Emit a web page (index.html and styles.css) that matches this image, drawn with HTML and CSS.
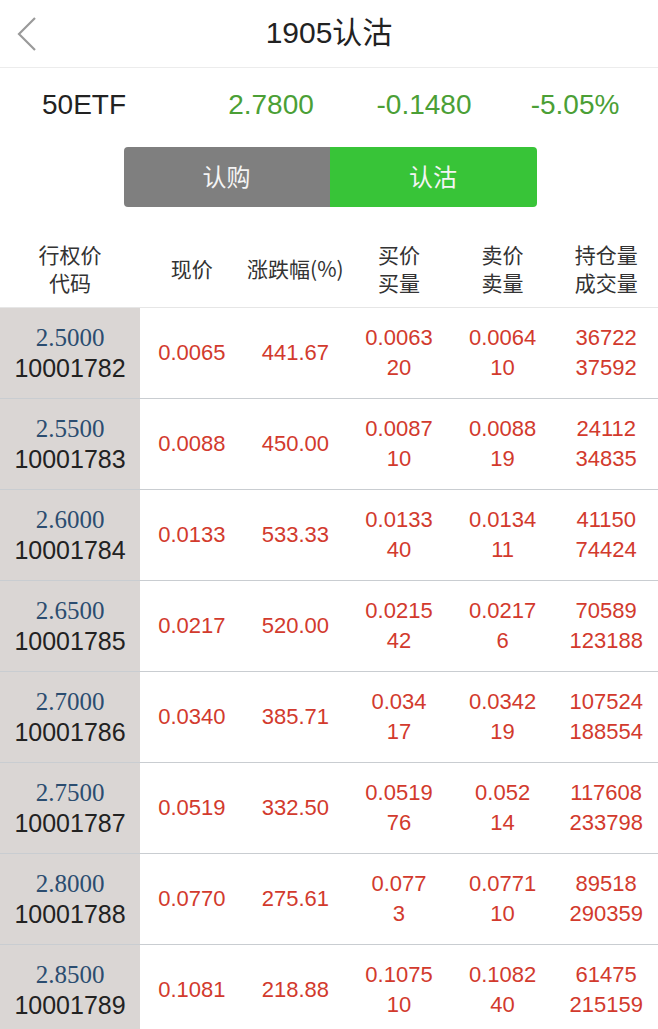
FILE: index.html
```html
<!DOCTYPE html>
<html lang="zh-CN">
<head>
<meta charset="utf-8">
<title>1905认沽</title>
<link rel="stylesheet" href="styles.css">
</head>
<body>
<div class="page">
  <header class="navbar">
    <div class="back">
      <svg width="22" height="36" viewBox="0 0 22 36"><polyline points="19,2 3,18 19,34" fill="none" stroke="#9a9a9a" stroke-width="2.2"/></svg>
    </div>
    <div class="title">1905认沽</div>
    <div></div>
  </header>

  <div class="quote">
    <div class="q-name">50ETF</div>
    <div class="q-val">2.7800</div>
    <div class="q-val">-0.1480</div>
    <div class="q-val">-5.05%</div>
  </div>

  <div class="seg-wrap">
    <div class="seg">
      <div class="seg-item seg-off">认购</div>
      <div class="seg-item seg-on">认沽</div>
    </div>
  </div>

  <div class="thead">
    <div class="th">行权价<br>代码</div>
    <div class="th">现价</div>
    <div class="th">涨跌幅(%)</div>
    <div class="th">买价<br>买量</div>
    <div class="th">卖价<br>卖量</div>
    <div class="th">持仓量<br>成交量</div>
  </div>

  <div class="tbody">
    <div class="row">
      <div class="c-first"><span class="strike">2.5000</span><span class="code">10001782</span></div>
      <div class="cell">0.0065</div><div class="cell">441.67</div>
      <div class="cell">0.0063<br>20</div><div class="cell">0.0064<br>10</div><div class="cell">36722<br>37592</div>
    </div>
    <div class="row">
      <div class="c-first"><span class="strike">2.5500</span><span class="code">10001783</span></div>
      <div class="cell">0.0088</div><div class="cell">450.00</div>
      <div class="cell">0.0087<br>10</div><div class="cell">0.0088<br>19</div><div class="cell">24112<br>34835</div>
    </div>
    <div class="row">
      <div class="c-first"><span class="strike">2.6000</span><span class="code">10001784</span></div>
      <div class="cell">0.0133</div><div class="cell">533.33</div>
      <div class="cell">0.0133<br>40</div><div class="cell">0.0134<br>11</div><div class="cell">41150<br>74424</div>
    </div>
    <div class="row">
      <div class="c-first"><span class="strike">2.6500</span><span class="code">10001785</span></div>
      <div class="cell">0.0217</div><div class="cell">520.00</div>
      <div class="cell">0.0215<br>42</div><div class="cell">0.0217<br>6</div><div class="cell">70589<br>123188</div>
    </div>
    <div class="row">
      <div class="c-first"><span class="strike">2.7000</span><span class="code">10001786</span></div>
      <div class="cell">0.0340</div><div class="cell">385.71</div>
      <div class="cell">0.034<br>17</div><div class="cell">0.0342<br>19</div><div class="cell">107524<br>188554</div>
    </div>
    <div class="row">
      <div class="c-first"><span class="strike">2.7500</span><span class="code">10001787</span></div>
      <div class="cell">0.0519</div><div class="cell">332.50</div>
      <div class="cell">0.0519<br>76</div><div class="cell">0.052<br>14</div><div class="cell">117608<br>233798</div>
    </div>
    <div class="row">
      <div class="c-first"><span class="strike">2.8000</span><span class="code">10001788</span></div>
      <div class="cell">0.0770</div><div class="cell">275.61</div>
      <div class="cell">0.077<br>3</div><div class="cell">0.0771<br>10</div><div class="cell">89518<br>290359</div>
    </div>
    <div class="row">
      <div class="c-first"><span class="strike">2.8500</span><span class="code">10001789</span></div>
      <div class="cell">0.1081</div><div class="cell">218.88</div>
      <div class="cell">0.1075<br>10</div><div class="cell">0.1082<br>40</div><div class="cell">61475<br>215159</div>
    </div>
  </div>
</div>
</body>
</html>
```

FILE: styles.css
```css
* { box-sizing: border-box; }
html, body { margin: 0; padding: 0; background: #fff; }
body {
  font-family: "Liberation Sans", "Noto Sans CJK SC", sans-serif;
  color: #222;
  width: 658px;
  overflow: hidden;
}
.page { width: 658px; }

.navbar {
  height: 68px;
  display: grid;
  grid-template-columns: 80px 1fr 80px;
  align-items: center;
  border-bottom: 1px solid #ececec;
}
.back { padding-left: 16px; display: flex; align-items: center; height: 36px; }
.title {
  text-align: center;
  font-size: 30px;
  color: #222;
  line-height: 1;
  padding-bottom: 2px;
}

.quote {
  height: 72px;
  display: grid;
  grid-template-columns: 148px 162px 144px 158px;
  padding-left: 42px;
  padding-top: 2px;
  align-items: center;
  font-size: 28px;
}
.q-name { color: #222; }
.q-val { text-align: center; color: #4b9f36; }

.seg-wrap { padding-top: 7px; display: flex; justify-content: center; }
.seg {
  width: 413px;
  height: 60px;
  display: grid;
  grid-template-columns: 206px 207px;
  border-radius: 4px;
  overflow: hidden;
  margin-left: 2px;
}
.seg-item {
  display: flex;
  align-items: center;
  justify-content: center;
  font-size: 24px;
  color: #f4f4f4;
  font-family: "Noto Sans CJK SC", sans-serif;
  padding-bottom: 4px;
}
.seg-off { background: #7f7f7f; }
.seg-on { background: #38c438; }

.thead {
  display: grid;
  grid-template-columns: 140px repeat(5, 1fr);
  padding-top: 30px;
  height: 101px;
  padding-bottom: 9px;
  border-bottom: 1px solid #e6e6e6;
}
.th {
  display: flex;
  align-items: center;
  justify-content: center;
  text-align: center;
  font-family: "Noto Sans CJK SC", sans-serif;
  font-size: 21px;
  line-height: 28px;
  color: #333;
}

.row {
  display: grid;
  grid-template-columns: 140px repeat(5, 1fr);
  height: 91px;
  border-bottom: 1px solid #c9cdd1;
}
.c-first {
  background: #dad6d4;
  display: flex;
  flex-direction: column;
  align-items: center;
  justify-content: center;
  line-height: 30px;
}
.strike {
  font-family: "Liberation Serif", serif;
  font-size: 25px;
  color: #2b4d70;
}
.code {
  font-size: 25px;
  color: #222;
}
.cell {
  display: flex;
  align-items: center;
  justify-content: center;
  text-align: center;
  font-size: 22px;
  line-height: 30px;
  color: #d23a2d;
}
```
